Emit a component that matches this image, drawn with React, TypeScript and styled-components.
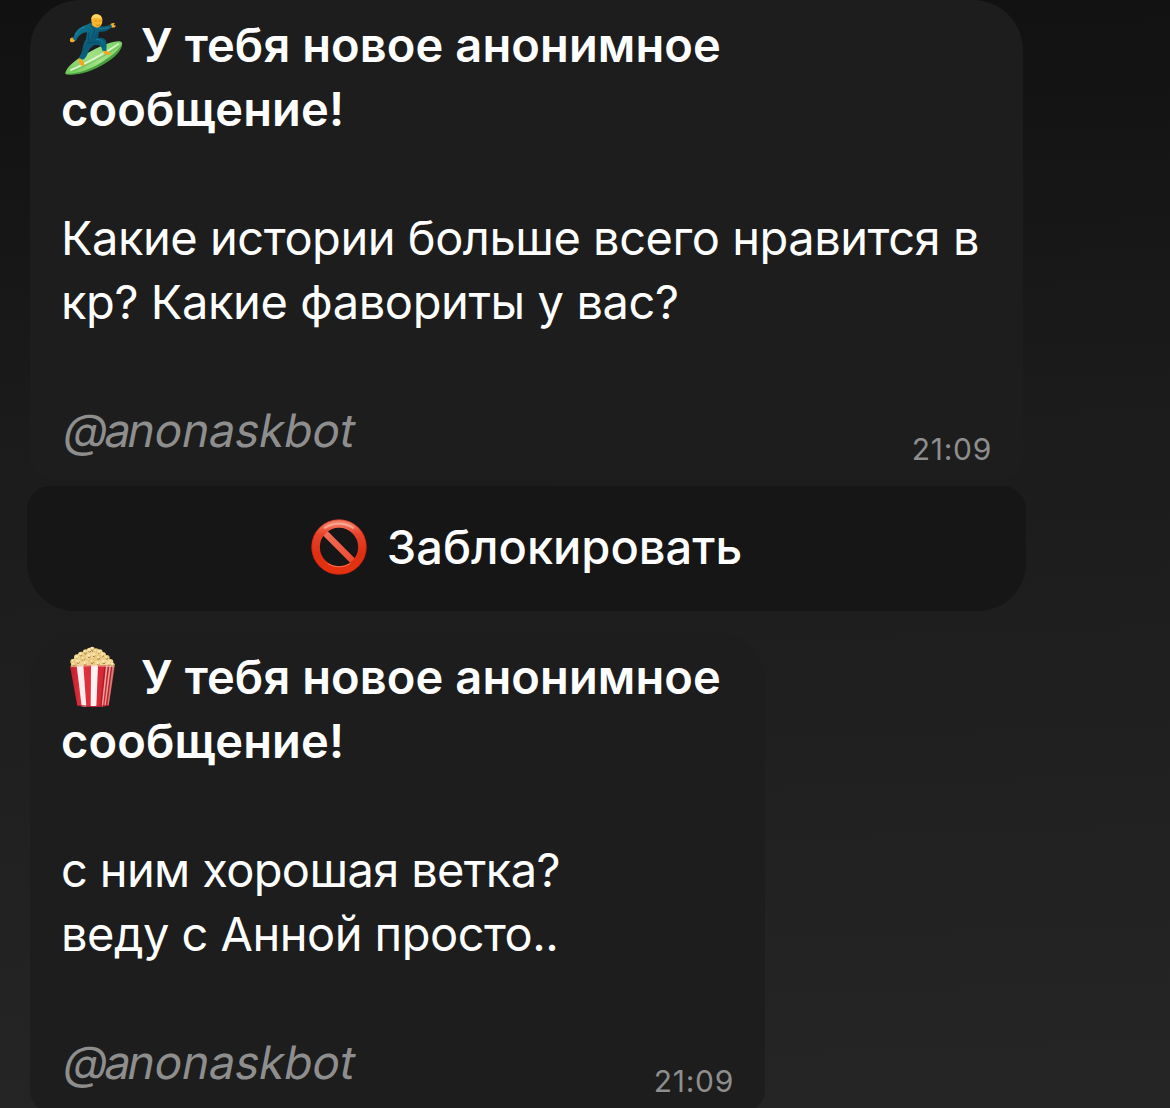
import { ReactElement, ReactNode } from "react";
import styled, { createGlobalStyle } from "styled-components";

const bubbleColor = "#1d1d1d";
const mutedColor = "#8e8e8e";

const GlobalStyle = createGlobalStyle`
    * {
        box-sizing: border-box;
    }

    body {
        margin: 0;
        background: #1b1b1b;
    }
`;

const Chat = styled.main`
    display: flex;
    flex-direction: column;
    align-items: flex-start;
    width: 1170px;
    height: 1108px;
    padding-left: 30px;
    overflow: hidden;
    background: linear-gradient(178deg, #111111 0%, #141414 13%, #1b1b1b 38%, #1e1e1e 57%, #232323 86%, #252525 100%);
    color: #fff;
    font-family: Inter, "Noto Sans", sans-serif;
    font-size: 47px;
    line-height: 64.2px;
`;

const Bubble = styled.article<{ $width: number }>`
    display: flex;
    flex-direction: column;
    flex-shrink: 0;
    width: ${({ $width }) => $width}px;
    height: 480px;
    padding: 13px 31px 0 31px;
    border-radius: 50px 50px 22px 22px;
    background: ${bubbleColor};
    white-space: nowrap;
`;

const Title = styled.h2`
    margin: 0 0 64.2px;
    font-size: inherit;
    font-weight: 600;
`;

const TitleLine = styled.span<{ $spacing: number }>`
    display: flex;
    height: 64.2px;
    letter-spacing: ${({ $spacing }) => $spacing}px;
`;

const Emoji = styled.svg`
    flex-shrink: 0;
    width: 64px;
    height: 64px;
    margin-right: 16px;
`;

const Line = styled.p<{ $spacing: number }>`
    margin: 0;
    letter-spacing: ${({ $spacing }) => $spacing}px;
`;

const BubbleFooter = styled.footer`
    display: flex;
    justify-content: space-between;
    margin-top: 64.2px;
    color: ${mutedColor};
`;

const BotName = styled.span`
    font-size: 46px;
    letter-spacing: -0.1px;
    transform: skewX(-11deg);
    transform-origin: 0 49px;

    &::first-letter {
        letter-spacing: -3px;
    }
`;

const Time = styled.time`
    padding-top: 19px;
    font-size: 30px;
    letter-spacing: 0.7px;
`;

const BlockButton = styled.button`
    display: flex;
    align-items: center;
    justify-content: center;
    flex-shrink: 0;
    width: 999px;
    height: 125px;
    margin: 6px 0 21px -3px;
    padding: 0 0 4px;
    border: 0;
    border-radius: 24px 24px 48px 48px;
    background: #161616;
    color: #fff;
    font: 500 47px/64px Inter, "Noto Sans", sans-serif;
`;

const BlockIcon = styled.svg`
    width: 56px;
    height: 56px;
    margin-right: 20px;
`;

const Surfer = (): ReactElement => (
    <Emoji viewBox="0 0 192 192">
        <defs>
            <linearGradient id="board" x1="0" y1="1" x2="1" y2="0">
                <stop offset="0" stopColor="#6ccb58" />
                <stop offset=".5" stopColor="#a2e186" />
                <stop offset="1" stopColor="#7bd266" />
            </linearGradient>
            <linearGradient id="suit" x1="0" y1="0" x2="1" y2="1">
                <stop offset="0" stopColor="#117f98" />
                <stop offset=".5" stopColor="#0b5a76" />
                <stop offset="1" stopColor="#087391" />
            </linearGradient>
        </defs>
        <path d="M13 180C17 163 40 144 68 127C97 109 158 78 180 86C192 94 170 126 134 148C98 172 45 190 13 183Z" fill="url(#board)" />
        <path d="M15 182C50 184 92 168 128 144C158 124 178 106 183 92C184 112 160 134 134 150C94 176 42 191 15 182Z" fill="#479f3d" />
        <path d="M28 172C66 156 136 118 174 92" fill="none" stroke="#e0f7cf" strokeWidth="5" />
        <path d="M36 174C80 157 134 128 174 99" fill="none" stroke="#6eb35b" strokeWidth="2.5" />
        <path d="M53 135Q63 137 68 147L71 156Q64 162 57 155L53 146Z" fill="#f5a623" />
        <path d="M129 109Q135 108 141 117L151 120Q150 126 141 126L127 121Z" fill="#f5a623" />
        <path d="M40 75Q29 70 27 79Q25 87 32 88Q40 89 45 79Z" fill="#f5ac26" />
        <path d="M147 35Q152 27 162 31L158 36L165 38Q162 47 149 43Z" fill="#f5ac26" />
        <path d="M81 34Q91 25 106 37Q126 46 150 34L153 42Q138 58 114 56L111 75Q128 71 134 82Q139 95 136 114L124 113Q123 101 113 95L100 96Q84 106 81 119Q75 136 66 140L53 135Q65 116 65 102Q69 86 75 78L78 58Q57 58 44 84L35 77Q45 43 81 34Z" fill="url(#suit)" />
        <path d="M86 38Q95 38 101 49L94 76M84 58Q80 74 84 85M108 58Q103 70 104 76M77 89L114 88" fill="none" stroke="#064b67" strokeWidth="3" opacity=".7" />
        <path d="M70 43Q50 44 44 66M105 79Q123 79 126 91M114 46Q132 48 144 43" fill="none" stroke="#23a3b9" strokeWidth="3" opacity=".5" />
        <path d="M93 31L108 32L107 43Q98 43 93 37Z" fill="#df8e1f" />
        <path d="M91 16Q93 4 107 4Q122 5 124 19Q125 41 109 44Q94 43 91 25Z" fill="#f8b62d" />
        <path d="M91 18Q94 3 108 4Q120 5 123 18Q107 11 91 18Z" fill="#ffd567" />
        <path d="M103 24H107M114 24H118M106 36Q112 39 117 35" fill="none" stroke="#aa6817" strokeWidth="2" />
    </Emoji>
);

const kernels: Array<[number, number, number]> = [
    [34, 48, 9], [46, 36, 10], [57, 27, 9], [71, 20, 9], [83, 15, 9], [91, 10, 7], [102, 17, 9], [113, 20, 9],
    [122, 29, 10], [134, 37, 9], [145, 49, 9], [49, 49, 11], [65, 40, 11], [82, 32, 11], [97, 29, 10], [110, 37, 11],
    [126, 50, 11], [70, 54, 11], [91, 49, 12], [109, 54, 10], [142, 55, 9], [36, 57, 9], [152, 57, 6],
];

const Popcorn = (): ReactElement => (
    <Emoji viewBox="-3 -2 192 192">
        <defs>
            <linearGradient id="tub">
                <stop offset="0" stopColor="#bb1d2b" />
                <stop offset=".25" stopColor="#e2323d" />
                <stop offset=".75" stopColor="#d62836" />
                <stop offset="1" stopColor="#9e1b2a" />
            </linearGradient>
        </defs>
        <path d="M27 60L48 29Q90 8 127 28L158 60L140 72H40Z" fill="#e0bc72" />
        {kernels.map(([x, y, r], index: number) => (
            <g key={`${x}-${y}`}>
                <circle cx={x} cy={y} r={r} fill={index % 3 ? "#f2d794" : "#e8c87c"} />
                <path d={`M${x - 4} ${y + 3}Q${x} ${y + 7} ${x + 4} ${y + 1}`} fill="none" stroke="#a0753a" strokeWidth="3" />
                <circle cx={x - 2} cy={y - 3} r="3" fill="#fbeabb" />
            </g>
        ))}
        <path d="M24 62Q91 55 159 62L140 180Q93 188 46 180Z" fill="url(#tub)" />
        <path d="M44 60L64 59L73 183L59 182Z" fill="#f8eeee" />
        <path d="M87 59H108L103 184H86Z" fill="#fff4f3" />
        <path d="M132 60L137 60L123 182L119 183Z" fill="#e9aaa1" />
        <path d="M142 60L147 61L131 181L127 182Z" fill="#e6a095" />
        <path d="M151 61L157 62L140 179L136 180Z" fill="#cf8178" />
        <path d="M129 60L116 183" stroke="#a91729" strokeWidth="3" />
        <path d="M26 63Q93 57 157 63" fill="none" stroke="#f7cfac" strokeWidth="2" />
        <path d="M46 179Q93 187 140 179" fill="none" stroke="#a92232" strokeWidth="3" />
    </Emoji>
);

const Forbidden = (): ReactElement => (
    <BlockIcon viewBox="0 0 168 168">
        <defs>
            <linearGradient id="ring" x1="0" y1="0" x2="0" y2="1">
                <stop offset="0" stopColor="#f27a60" />
                <stop offset=".22" stopColor="#e8432a" />
                <stop offset=".65" stopColor="#de2f12" />
                <stop offset="1" stopColor="#e43210" />
            </linearGradient>
            <linearGradient id="bar" x1="0" y1="0" x2="1" y2="1">
                <stop offset="0" stopColor="#ef715b" />
                <stop offset="1" stopColor="#ee482e" />
            </linearGradient>
        </defs>
        <path d="M37 37L131 131" stroke="url(#bar)" strokeWidth="19" />
        <circle cx="84" cy="84" r="70" fill="none" stroke="url(#ring)" strokeWidth="25" />
        <path d="M42 26Q84 2 126 26" fill="none" stroke="#ffc5b4" strokeWidth="7" strokeLinecap="round" opacity=".6" />
        <circle cx="84" cy="84" r="82" fill="none" stroke="#bf1d0b" strokeWidth="3" opacity=".6" />
        <path d="M50 134Q84 153 118 134" fill="none" stroke="#ff8a70" strokeWidth="3" opacity=".7" />
    </BlockIcon>
);

interface MessageProps {
    emoji: ReactNode;
    width: number;
    lines: Array<[string, number]>;
}

const Message = ({ emoji, width, lines }: MessageProps): ReactElement => (
    <Bubble $width={width}>
        <Title>
            <TitleLine $spacing={0.1}>{emoji}У тебя новое анонимное</TitleLine>
            <TitleLine $spacing={0.15}>сообщение!</TitleLine>
        </Title>
        {lines.map(([text, spacing]) => <Line key={text} $spacing={spacing}>{text}</Line>)}
        <BubbleFooter>
            <BotName>@anonaskbot</BotName>
            <Time>21:09</Time>
        </BubbleFooter>
    </Bubble>
);

export default function App(): ReactElement {
    return (
        <>
            <GlobalStyle />
            <Chat>
                <Message
                    emoji={<Surfer />}
                    width={993}
                    lines={[["Какие истории больше всего нравится в", -0.47], ["кр? Какие фавориты у вас?", -0.41]]}
                />
                <BlockButton type="button">
                    <Forbidden />
                    Заблокировать
                </BlockButton>
                <Message
                    emoji={<Popcorn />}
                    width={735}
                    lines={[["с ним хорошая ветка?", -0.64], ["веду с Анной просто..", -0.52]]}
                />
            </Chat>
        </>
    );
}
